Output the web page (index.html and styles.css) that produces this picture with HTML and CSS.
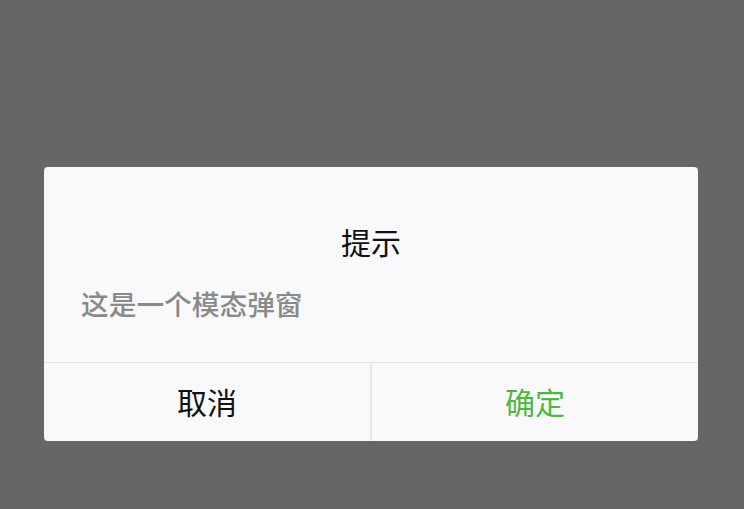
FILE: index.html
```html
<!DOCTYPE html>
<html lang="zh-CN">
<head>
<meta charset="utf-8">
<link rel="stylesheet" href="styles.css">
</head>
<body>
<div class="mask">
  <div class="dialog">
    <div class="dialog-body">
      <div class="dialog-title">提示</div>
      <div class="dialog-content">这是一个模态弹窗</div>
    </div>
    <div class="dialog-footer">
      <div class="btn btn-cancel">取消</div>
      <div class="btn btn-confirm">确定</div>
    </div>
  </div>
</div>
</body>
</html>
```
FILE: styles.css
```css
html, body {
  margin: 0;
  padding: 0;
  height: 100%;
  background: #666666;
  font-family: "Noto Sans CJK SC", "Noto Sans", sans-serif;
}
.mask {
  padding-top: 167px;
  padding-left: 44px;
}
.dialog {
  width: 654px;
  background: #f9f9fb;
  border-radius: 4px;
  overflow: hidden;
}
.dialog-body {
  padding: 54px 37px 39px;
  border-bottom: 1px solid #e2e2e4;
}
.dialog-title {
  text-align: center;
  font-size: 30px;
  line-height: 40px;
  color: #111;
}
.dialog-content {
  margin-top: 22px;
  font-size: 27.7px;
  line-height: 40px;
  font-weight: 500;
  color: #8a8a8a;
}
.dialog-footer {
  display: flex;
  height: 78px;
}
.btn {
  flex: 1;
  display: flex;
  align-items: center;
  justify-content: center;
  padding-bottom: 3px;
  font-size: 30px;
}
.btn-cancel {
  color: #111;
  border-right: 2px solid #e6e6e8;
}
.btn-confirm {
  color: #4cb93e;
}
```
